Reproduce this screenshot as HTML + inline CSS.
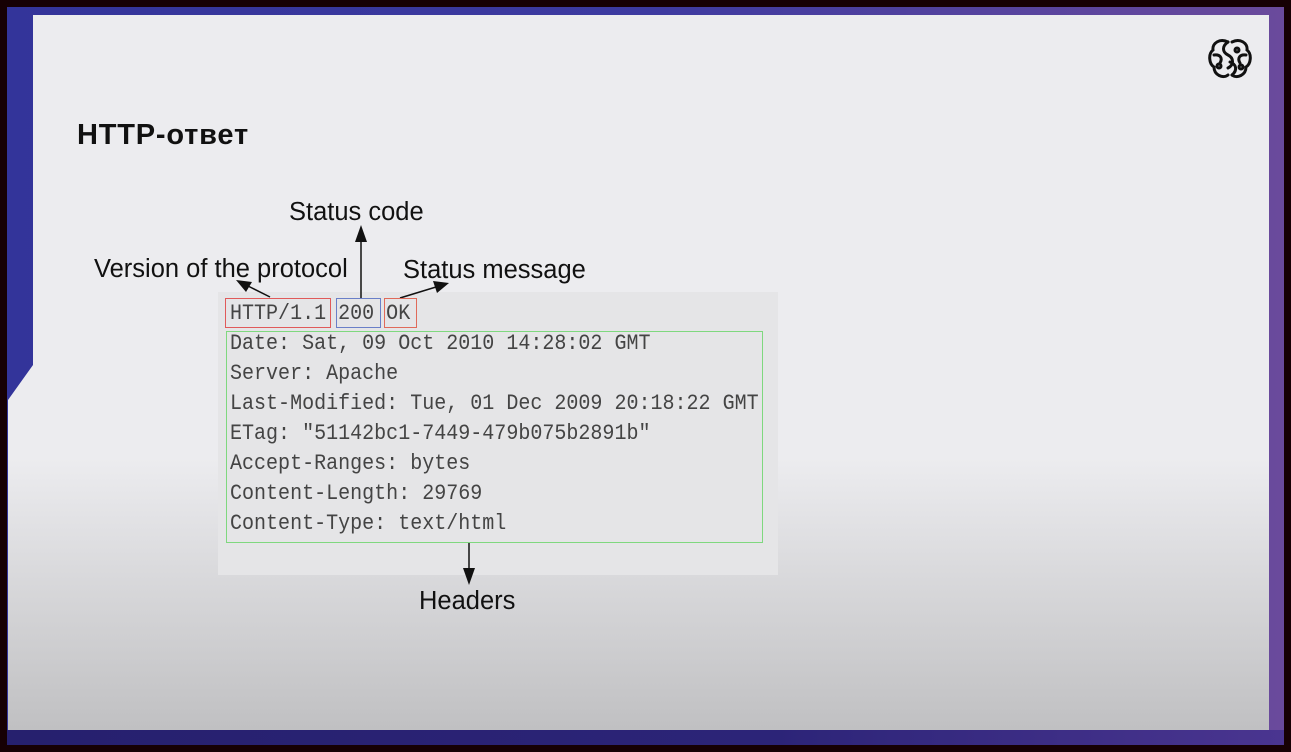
<!DOCTYPE html>
<html><head><meta charset="utf-8"><style>
*{margin:0;padding:0;box-sizing:border-box}
html,body{width:1291px;height:752px;overflow:hidden;background:#160004}
.frame{position:absolute;left:7px;top:7px;width:1277px;height:738px;background:linear-gradient(90deg,#33349a 0%,#3d3aa0 50%,#6a4a9c 100%)}
.bottom{position:absolute;left:7px;top:730px;width:1277px;height:15px;background:linear-gradient(90deg,#26206e,#2c2478 60%,#4a3590)}
.slide{position:absolute;left:8px;top:15px;width:1261px;height:715px;background:linear-gradient(180deg,#ececef 0%,#ececef 62%,#c0c0c2 100%);clip-path:polygon(25px 0,100% 0,100% 100%,0 100%,0 385px,25px 350px)}
.t{position:absolute;font-family:"Liberation Sans",Arial,sans-serif;color:#111;white-space:nowrap}
.lbl{font-size:25.5px;color:#111}
.mono{position:absolute;font-family:"Liberation Mono","DejaVu Sans Mono",monospace;font-size:22px;color:#444;white-space:pre;line-height:30px;transform:scaleX(0.91);transform-origin:0 0}
.box{position:absolute;border:1.5px solid}
</style></head><body>
<div class="frame"></div>
<div class="bottom"></div>
<div class="slide"></div>
<div class="t" style="left:77px;top:119px;font-size:29px;font-weight:bold;letter-spacing:0.8px">HTTP-ответ</div>
<svg style="position:absolute;left:1208px;top:38px" width="44" height="42" viewBox="0 0 44 42" fill="none" stroke="#111" stroke-width="3" stroke-linecap="round">
<path d="M20 4 C12 0 4 5 5 12 C0 16 1 26 6 29 C6 37 15 41 20 37"/>
<path d="M24 4 C32 0 40 5 39 12 C44 16 43 26 38 29 C38 37 29 41 24 37"/>
<path d="M20 4 C14 8 14 14 20 17 C26 20 26 27 20 30"/>
<path d="M24 37 C30 32 28 26 22 24"/>
<path d="M6 17 C12 16 15 20 12 25"/><path d="M38 17 C32 16 29 20 32 25"/>
<circle cx="11" cy="28" r="2"/><circle cx="33" cy="29" r="2"/><circle cx="29" cy="12" r="2"/>
</svg>
<div style="position:absolute;left:218px;top:292px;width:560px;height:283px;background:#e5e5e7"></div>
<div class="t lbl" style="left:289px;top:198px">Status code</div>
<div class="t lbl" style="left:94px;top:255px">Version of the protocol</div>
<div class="t lbl" style="left:403px;top:256px">Status message</div>
<div class="t lbl" style="left:419px;top:587px">Headers</div>
<svg style="position:absolute;left:0;top:0" width="1291" height="752">
<g stroke="#111" stroke-width="1.5" fill="#111">
<line x1="361" y1="298" x2="361" y2="240"/><polygon points="361,225 355,242 367,242" stroke="none"/>
<line x1="270" y1="297" x2="248" y2="286"/><polygon points="236,280 252,282 246,292" stroke="none"/>
<line x1="400" y1="298" x2="436" y2="287"/><polygon points="449,283 433,281 437,293" stroke="none"/>
<line x1="469" y1="543" x2="469" y2="570"/><polygon points="469,585 463,568 475,568" stroke="none"/>
</g></svg>
<div class="box" style="left:225px;top:298px;width:106px;height:30px;border-color:#e05a5a"></div>
<div class="box" style="left:336px;top:298px;width:45px;height:30px;border-color:#6a7fc8"></div>
<div class="box" style="left:384px;top:298px;width:33px;height:30px;border-color:#e06a5a"></div>
<div class="box" style="left:226px;top:331px;width:537px;height:212px;border-color:#7fd87f"></div>
<div class="mono" style="left:230px;top:299px">HTTP/1.1 200 OK</div>
<div class="mono" style="left:230px;top:329px">Date: Sat, 09 Oct 2010 14:28:02 GMT
Server: Apache
Last-Modified: Tue, 01 Dec 2009 20:18:22 GMT
ETag: "51142bc1-7449-479b075b2891b"
Accept-Ranges: bytes
Content-Length: 29769
Content-Type: text/html</div>
</body></html>
